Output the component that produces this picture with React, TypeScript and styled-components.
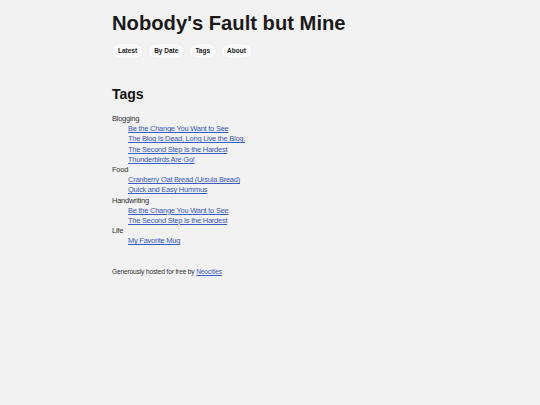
import styled, { createGlobalStyle } from "styled-components";

const GlobalStyle = createGlobalStyle`
	html, body {
		margin: 0;
		padding: 0;
		background: #f2f2f2;
	}
	body {
		font-family: "Liberation Sans", Arial, sans-serif;
		color: #222;
	}
`;

const tags = [
	{
		name: "Blogging",
		posts: [
			"Be the Change You Want to See",
			"The Blog Is Dead, Long Live the Blog.",
			"The Second Step Is the Hardest",
			"Thunderbirds Are Go!",
		],
	},
	{
		name: "Food",
		posts: ["Cranberry Oat Bread (Ursula Bread)", "Quick and Easy Hummus"],
	},
	{
		name: "Handwriting",
		posts: ["Be the Change You Want to See", "The Second Step Is the Hardest"],
	},
	{
		name: "Life",
		posts: ["My Favorite Mug"],
	},
];

const navItems = ["Latest", "By Date", "Tags", "About"];

export default function App() {
	return (
		<>
			<GlobalStyle />
			<Page>
				<Header>
					<SiteTitle>Nobody's Fault but Mine</SiteTitle>
					<Nav>
						{navItems.map((item) => (
							<NavPill key={item} href="#">
								{item}
							</NavPill>
						))}
					</Nav>
				</Header>
				<Main>
					<Heading>Tags</Heading>
					<TagList>
						{tags.map((tag) => (
							<li key={tag.name}>
								<TagName>{tag.name}</TagName>
								<PostList>
									{tag.posts.map((post) => (
										<li key={post}>
											<PostLink href="#">{post}</PostLink>
										</li>
									))}
								</PostList>
							</li>
						))}
					</TagList>
				</Main>
				<Footer>
					Generously hosted for free by <PostLink href="#">Neocities</PostLink>
				</Footer>
			</Page>
		</>
	);
}

const Page = styled.div`
	max-width: 316px;
	margin: 0 auto;
	padding-top: 11px;
	font-size: 7.5px;
	letter-spacing: -0.25px;
	line-height: 10.2px;
`;

const Header = styled.header`
	display: flex;
	flex-direction: column;
	gap: 9px;
	letter-spacing: normal;
`;

const SiteTitle = styled.h1`
	margin: 0;
	font-size: 20.2px;
	line-height: 24px;
	font-weight: bold;
	color: #1a1a1a;
`;

const Nav = styled.nav`
	display: flex;
	gap: 5px;
`;

const NavPill = styled.a`
	display: inline-flex;
	align-items: center;
	height: 14px;
	padding: 0 6px;
	border-radius: 7px;
	background: #f9f9f9;
	box-shadow: 0 0 1px rgba(0, 0, 0, 0.12);
	color: #222;
	font-size: 6.5px;
	font-weight: bold;
	text-decoration: none;
`;

const Main = styled.main`
	margin-top: 28px;
`;

const Heading = styled.h2`
	margin: 0 0 12px;
	font-size: 14px;
	line-height: 16px;
	font-weight: bold;
	letter-spacing: normal;
	color: #111;
`;

const TagList = styled.ul`
	list-style: none;
	margin: 0;
	padding: 0;
`;

const TagName = styled.span`
	color: #333;
`;

const PostList = styled.ul`
	list-style: none;
	margin: 0;
	padding-left: 16px;
`;

const PostLink = styled.a`
	color: #3b5bbf;
	text-decoration: underline;
`;

const Footer = styled.footer`
	margin-top: 20px;
	font-size: 6.6px;
	letter-spacing: -0.15px;
	color: #333;
`;
